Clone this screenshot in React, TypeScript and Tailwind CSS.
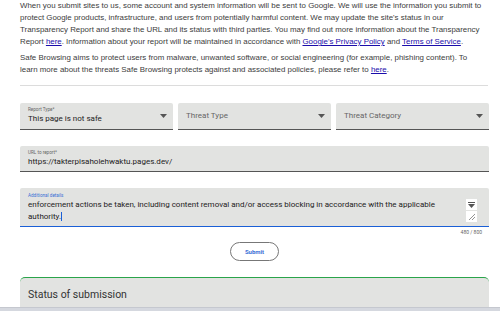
import React from "react";

function Caret() {
  return (
    <svg width="7" height="4" viewBox="0 0 7 4" className="shrink-0">
      <path d="M0 0 L7 0 L3.5 4 Z" fill="#555" />
    </svg>
  );
}

export default function App() {
  return (
    <div className="w-[500px] h-[311px] overflow-hidden bg-white relative" style={{ fontFamily: '"Liberation Sans", Arial, sans-serif' }}>
      <div className="pl-[20px] pr-[15px] pt-[0px] text-[7.9px] leading-[12px] text-[#3c3c3c]">
        <p>
          When you submit sites to us, some account and system information will be sent to Google. We will use the information you submit to protect Google products, infrastructure, and users from potentially harmful content. We may update the site's status in our Transparency Report and share the URL and its status with third parties. You may find out more information about the Transparency Report <a className="text-[#1a0dab] underline">here</a>. Information about your report will be maintained in accordance with <a className="text-[#1a0dab] underline">Google's Privacy Policy</a> and <a className="text-[#1a0dab] underline">Terms of Service</a>.
        </p>
        <p className="mt-[4px]">
          Safe Browsing aims to protect users from malware, unwanted software, or social engineering (for example, phishing content). To learn more about the threats Safe Browsing protects against and associated policies, please refer to <a className="text-[#1a0dab] underline">here</a>.
        </p>
      </div>
      <div className="ml-[20px] mr-[12px] mt-[9px] h-px bg-[#dcdcdc]" />

      <div className="pl-[20px] pr-[11px]" style={{ fontFamily: 'Roboto, "Liberation Sans", sans-serif' }}>
        <div className="mt-[17px] flex gap-[5px]">
          <div className="flex-1 h-[27px] bg-[#e2e3e1] border-b-[1.5px] border-[#555] rounded-t-[2px] flex items-center pl-[8px] pr-[6px]">
            <div className="flex-1 flex flex-col self-start pt-[4px]">
              <span className="text-[4.6px] leading-[6px] text-[#666]">Report Type*</span>
              <span className="text-[8px] leading-[12px] text-[#222]">This page is not safe</span>
            </div>
            <Caret />
          </div>
          <div className="flex-1 h-[27px] bg-[#e2e3e1] border-b-[1.5px] border-[#555] rounded-t-[2px] flex items-center pl-[8px] pr-[6px]">
            <span className="flex-1 text-[8px] text-[#666]">Threat Type</span>
            <Caret />
          </div>
          <div className="flex-1 h-[27px] bg-[#e2e3e1] border-b-[1.5px] border-[#555] rounded-t-[2px] flex items-center pl-[8px] pr-[6px]">
            <span className="flex-1 text-[8px] text-[#666]">Threat Category</span>
            <Caret />
          </div>
        </div>

        <div className="mt-[16px] h-[26px] bg-[#e2e3e1] border-b-[1.5px] border-[#555] rounded-t-[2px] flex flex-col pt-[4px] pl-[8px]">
          <span className="text-[4.6px] leading-[6px] text-[#666]">URL to report*</span>
          <span className="text-[8px] leading-[12px] text-[#222]">https://takterpisaholehwaktu.pages.dev/</span>
        </div>

        <div className="mt-[16px] h-[39px] bg-[#e2e3e1] border-b-[1.5px] border-[#1a5fd6] rounded-t-[2px] flex pl-[8px] pr-[8px] pt-[5px]">
          <div className="flex-1 flex flex-col">
            <span className="text-[4.6px] leading-[6px] text-[#3b6fd6]">Additional details</span>
            <span className="text-[8px] leading-[12px] text-[#222]">
              enforcement actions be taken, including content removal and/or access blocking in accordance with the applicable authority.<span className="inline-block w-[1px] h-[9px] bg-[#1a5fd6] align-middle" />
            </span>
          </div>
          <div className="flex flex-col items-center w-[12px] mt-[6px] ml-[4px] mr-[4px]">
            <div className="w-[11px] h-[11px] bg-white flex flex-col items-center justify-center gap-[1px]">
              <div className="w-[7px] h-[1px] bg-[#555]" />
              <svg width="7" height="4" viewBox="0 0 7 4"><path d="M0 0 L7 0 L3.5 4 Z" fill="#555" /></svg>
            </div>
            <div className="w-[11px] h-[11px] bg-white mt-[1px] flex items-center justify-center">
              <svg width="9" height="9" viewBox="0 0 9 9"><path d="M2 8 L8 2 M5 8 L8 5" stroke="#777" strokeWidth="0.8" /></svg>
            </div>
          </div>
        </div>
        <div className="flex justify-end pr-[7px] mt-[2px] text-[5px] leading-[6px] text-[#666]">480 / 800</div>

        <div className="flex justify-center mt-[7px]">
          <button className="w-[49px] h-[19px] rounded-full border border-[#777] bg-white text-[6px] font-bold text-[#3b6fd6]">Submit</button>
        </div>

        <div className="mt-[16px] h-[40px] bg-[#e2e3e1] rounded-t-[5px] border-t-[1.5px] border-[#2aa44a] pl-[8px] pt-[3px]">
          <span className="text-[10.5px] leading-[14px] text-[#333]">Status of submission</span>
        </div>
      </div>
      <div className="absolute left-0 right-0 bottom-0 h-[4px] bg-[#d5d8df] border-t border-[#c5c8cf]" />
    </div>
  );
}
